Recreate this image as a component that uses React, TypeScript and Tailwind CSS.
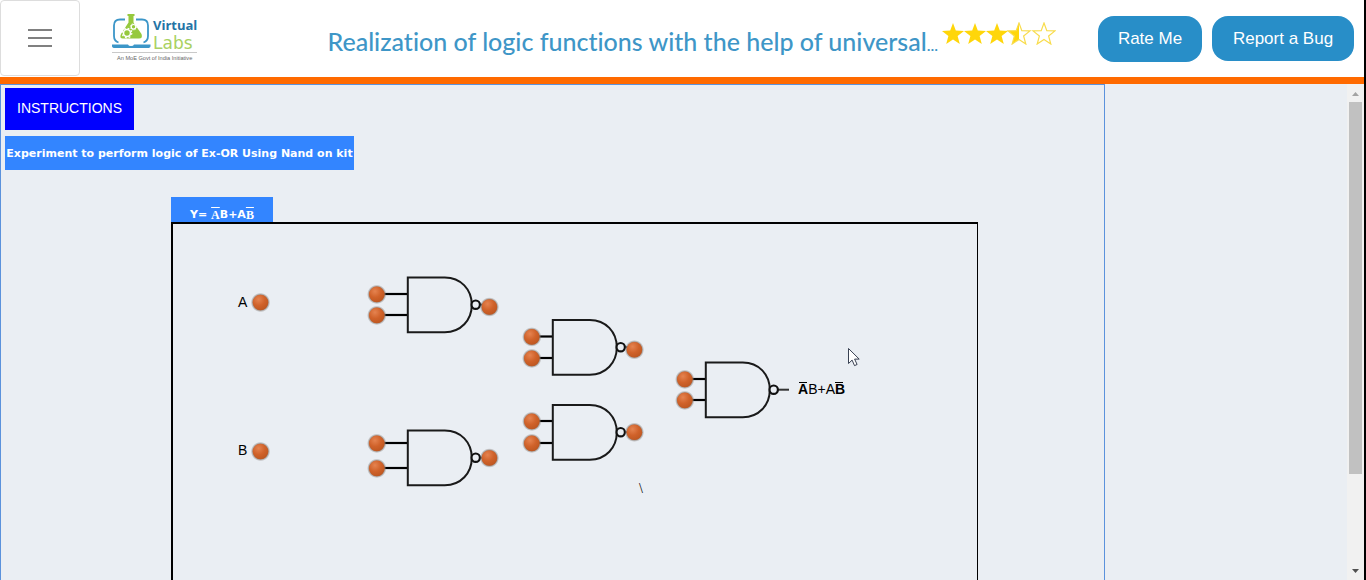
import React from "react";

type Point = { x: number; y: number };
type Gate = { x: number; y: number; pins: number[]; pinX: number; output?: Point };

const gates: Gate[] = [
  { x: 408, y: 277, pins: [294, 315], pinX: 377, output: { x: 489, y: 307 } },
  { x: 408, y: 430, pins: [443, 468], pinX: 377, output: { x: 489, y: 458 } },
  { x: 553, y: 319.5, pins: [336.5, 358], pinX: 532, output: { x: 634, y: 349.7 } },
  { x: 553, y: 404.5, pins: [421, 443], pinX: 532, output: { x: 634, y: 432.3 } },
  { x: 706, y: 362, pins: [379, 400], pinX: 685 },
];

const starPoints = "11,0 13.8,7.6 22,7.9 15.6,13 17.8,21 11,16.4 4.2,21 6.4,13 0,7.9 8.2,7.6";

function Terminal({ x, y }: Point) {
  return (
    <g>
      <circle cx={x} cy={y} r="9.8" fill="url(#halo)" />
      <circle cx={x} cy={y} r="7.8" fill="url(#ball)" />
    </g>
  );
}

function NandGate({ gate }: { gate: Gate }) {
  const { x, y, pins, pinX, output } = gate;
  const mid = y + 27.7;
  return (
    <g>
      {pins.map((p) => (
        <path key={p} d={`M${pinX} ${p}H${x}`} stroke="#000" strokeWidth="2.2" />
      ))}
      <path
        d={`M${x - 0.2} ${y + 0.4}h37c16 0 27 12 27 27.4s-11 27.4-27 27.4h-37z`}
        fill="none"
        stroke="#1a1a1a"
        strokeWidth="2"
      />
      <path d={`M${x + 72} ${mid}h${output ? 6 : 11}`} stroke="#333" strokeWidth="2" />
      <circle cx={x + 67.7} cy={mid} r="4.2" fill="#eaeef3" stroke="#111" strokeWidth="2.2" />
      {pins.map((p) => (
        <Terminal key={p} x={pinX - 0.2} y={p + 0.4} />
      ))}
      {output && <Terminal x={output.x + 0.4} y={output.y} />}
    </g>
  );
}

function Circuit() {
  return (
    <svg
      viewBox="173 224 804 356"
      className="block h-[356px] w-[804px] font-['Liberation_Sans',sans-serif]"
      role="img"
      aria-label="NAND gate circuit"
    >
      <defs>
        <radialGradient id="ball" cx="38%" cy="30%" r="72%">
          <stop offset="0" stopColor="#e58350" />
          <stop offset="0.55" stopColor="#d0622a" />
          <stop offset="1" stopColor="#be5721" />
        </radialGradient>
        <radialGradient id="halo">
          <stop offset="0.75" stopColor="#8b7567" stopOpacity="0.9" />
          <stop offset="1" stopColor="#8b8b8b" stopOpacity="0" />
        </radialGradient>
      </defs>
      {gates.map((g) => (
        <NandGate key={`${g.x}-${g.y}`} gate={g} />
      ))}
      <Terminal x={260.5} y={302.5} />
      <Terminal x={260.5} y={451.5} />
      <g fill="#000" fontSize="14">
        <text x="238" y="307">A</text>
        <text x="238" y="455">B</text>
        <text x="798" y="394">
          <tspan fontWeight="bold">A</tspan>B+A<tspan fontWeight="bold">B</tspan>
        </text>
        <text x="639" y="493" className="font-['Liberation_Serif',serif]">\</text>
      </g>
      <path d="M799 382.5h8M835 382.5h8" stroke="#000" strokeWidth="1.2" />
      <path
        d="M848.5 348.5v15l3.6-3.4 2.4 5.5 2.6-1.1-2.5-5.4h4.600z"
        fill="#fff"
        stroke="#252c40"
        strokeWidth="0.9"
      />
    </svg>
  );
}

function Logo() {
  return (
    <svg viewBox="0 0 90 50" className="h-[50px] w-[90px] font-['Open_Sans',sans-serif]" role="img" aria-label="Virtual Labs">
      <path d="M13 5.500H8q-6 0-6 6v10.500q0 5 4.500 6.500M24 5.500h6q6 0 6 6v10.500q0 5-4.500 6.500" fill="none" stroke="#3c96c8" strokeWidth="1.800" />
      <path d="M0 30.500h16q.5 1.500 3 1.500t3-1.500h16.500v1.500q0 2-3 2H3q-3 0-3-2z" fill="#3c96c8" />
      <path d="M15.500 0h7v2h-1v6.500L29.500 20q1.500 4.500-2.500 4.500H11q-4 0-2-4.500l7.500-11.500V2h-1z" fill="#96c93d" />
      <circle cx="15" cy="19" r="3.500" fill="#96c93d" stroke="#fff" strokeWidth="1.600" />
      <circle cx="15" cy="19" r="4.800" fill="none" stroke="#fff" strokeWidth="1.200" strokeDasharray="1.880 1.890" />
      <circle cx="21.500" cy="12.800" r="2.300" fill="#96c93d" stroke="#fff" strokeWidth="1.200" />
      <circle cx="21.500" cy="12.800" r="3.200" fill="none" stroke="#fff" strokeWidth="0.800" strokeDasharray="1.250 1.260" />
      <text x="41" y="16" fontSize="13" fontWeight="700" fill="#2474a5">Virtual</text>
      <text x="41" y="35" fontSize="17" fill="#a9d162" className="font-['DejaVu_Sans',sans-serif]">Labs</text>
      <path d="M0 38.500h85" stroke="#bbb" strokeWidth="0.800" />
      <text x="5" y="46" fontSize="5.600" fill="#666" className="font-['Liberation_Sans',sans-serif]">An MoE Govt of India Initiative</text>
    </svg>
  );
}

function Rating() {
  return (
    <svg viewBox="0 0 114 23" className="mt-[22px] ml-1 h-[23px] w-[114px] shrink-0" role="img" aria-label="3.5 of 5 stars">
      <defs>
        <clipPath id="half"><rect width="11" height="23" /></clipPath>
      </defs>
      {[0, 22, 44].map((x) => (
        <polygon key={x} points={starPoints} transform={`translate(${x} 1)`} fill="#ffd60a" />
      ))}
      <polygon points={starPoints} transform="translate(66 1)" fill="#ffd60a" clipPath="url(#half)" />
      {[66, 91].map((x) => (
        <polygon key={x} points={starPoints} transform={`translate(${x} 1)`} fill="none" stroke="#f8dc4c" strokeWidth="1.200" />
      ))}
    </svg>
  );
}

export default function App() {
  return (
    <div className="flex h-screen flex-col overflow-hidden border-r-2 border-black bg-[#eaeef3] font-['Liberation_Sans',sans-serif]">
      <header className="flex h-[84px] shrink-0 items-start border-b-7 border-[#ff6a00] bg-white">
        <button
          type="button"
          aria-label="Open menu"
          className="flex h-[76px] w-20 shrink-0 flex-col items-center justify-center gap-1.5 rounded border border-[#ddd]"
        >
          <span className="h-0.5 w-6 bg-[#808080]" />
          <span className="h-0.5 w-6 bg-[#808080]" />
          <span className="h-0.5 w-6 bg-[#808080]" />
        </button>
        <a href="#" className="mt-3.5 ml-8 shrink-0">
          <Logo />
        </a>
        <div className="flex min-w-0 flex-1 justify-end pr-[42px]">
          <h1 className="mt-[25px] truncate font-['Lato',sans-serif] text-[25px] leading-8 font-medium text-[#3e96c7] [font-variant-ligatures:none]">
            Realization of logic functions with the help of universal<span className="text-base">...</span>
          </h1>
          <Rating />
        </div>
        <div className="mt-4 mr-2.5 flex shrink-0 gap-2.5 text-[17px] text-white">
          <button type="button" className="h-[46px] w-[104px] rounded-2xl bg-[#288ec8]">
            Rate Me
          </button>
          <button type="button" className="h-[45px] w-[142px] rounded-2xl bg-[#288ec8]">
            Report a Bug
          </button>
        </div>
      </header>
      <div className="flex min-h-0 flex-1">
        <main className="min-w-0 flex-1 overflow-hidden">
          <section className="flex w-[1105px] flex-col items-start border border-[#5b92dc] pt-[3px] pl-1">
            <button type="button" className="h-[42px] w-[129px] bg-[#0000ff] pb-0.5 text-sm text-white">
              INSTRUCTIONS
            </button>
            <h2 className="mt-1.5 flex h-[34px] w-[349px] items-center justify-center bg-[#3385ff] pt-0.5 font-['DejaVu_Sans',sans-serif] text-[11px] font-bold whitespace-nowrap text-white">
              Experiment to perform logic of Ex-OR Using Nand on kit
            </h2>
            <div className="mt-[27px] ml-[166px]">
              <h3 className="flex h-[25px] w-[102px] items-end justify-center bg-[#3385ff] font-['DejaVu_Sans',sans-serif] text-[11px] leading-[14px] font-bold whitespace-pre text-white">
                Y= <span className="font-['Liberation_Serif',serif] text-xs leading-[14px] overline">A</span>B+A
                <span className="font-['Liberation_Serif',serif] text-xs leading-[14px] overline">B</span>
              </h3>
              <div className="border-2 border-r border-black">
                <Circuit />
              </div>
            </div>
          </section>
        </main>
        <div className="flex w-[17px] shrink-0 flex-col items-center justify-between bg-[#f1f1f1] pt-px">
          <div className="flex flex-col items-center">
            <svg viewBox="0 0 17 17" className="size-[17px]" aria-hidden="true">
              <path d="M5 11h7L8.500 7z" fill="#a3a3a3" />
            </svg>
            <div className="h-[372px] w-[13px] bg-[#c1c1c1]" />
          </div>
          <svg viewBox="0 0 17 17" className="size-[17px]" aria-hidden="true">
            <path d="M5 6h7l-3.500 4z" fill="#505050" />
          </svg>
        </div>
      </div>
    </div>
  );
}
